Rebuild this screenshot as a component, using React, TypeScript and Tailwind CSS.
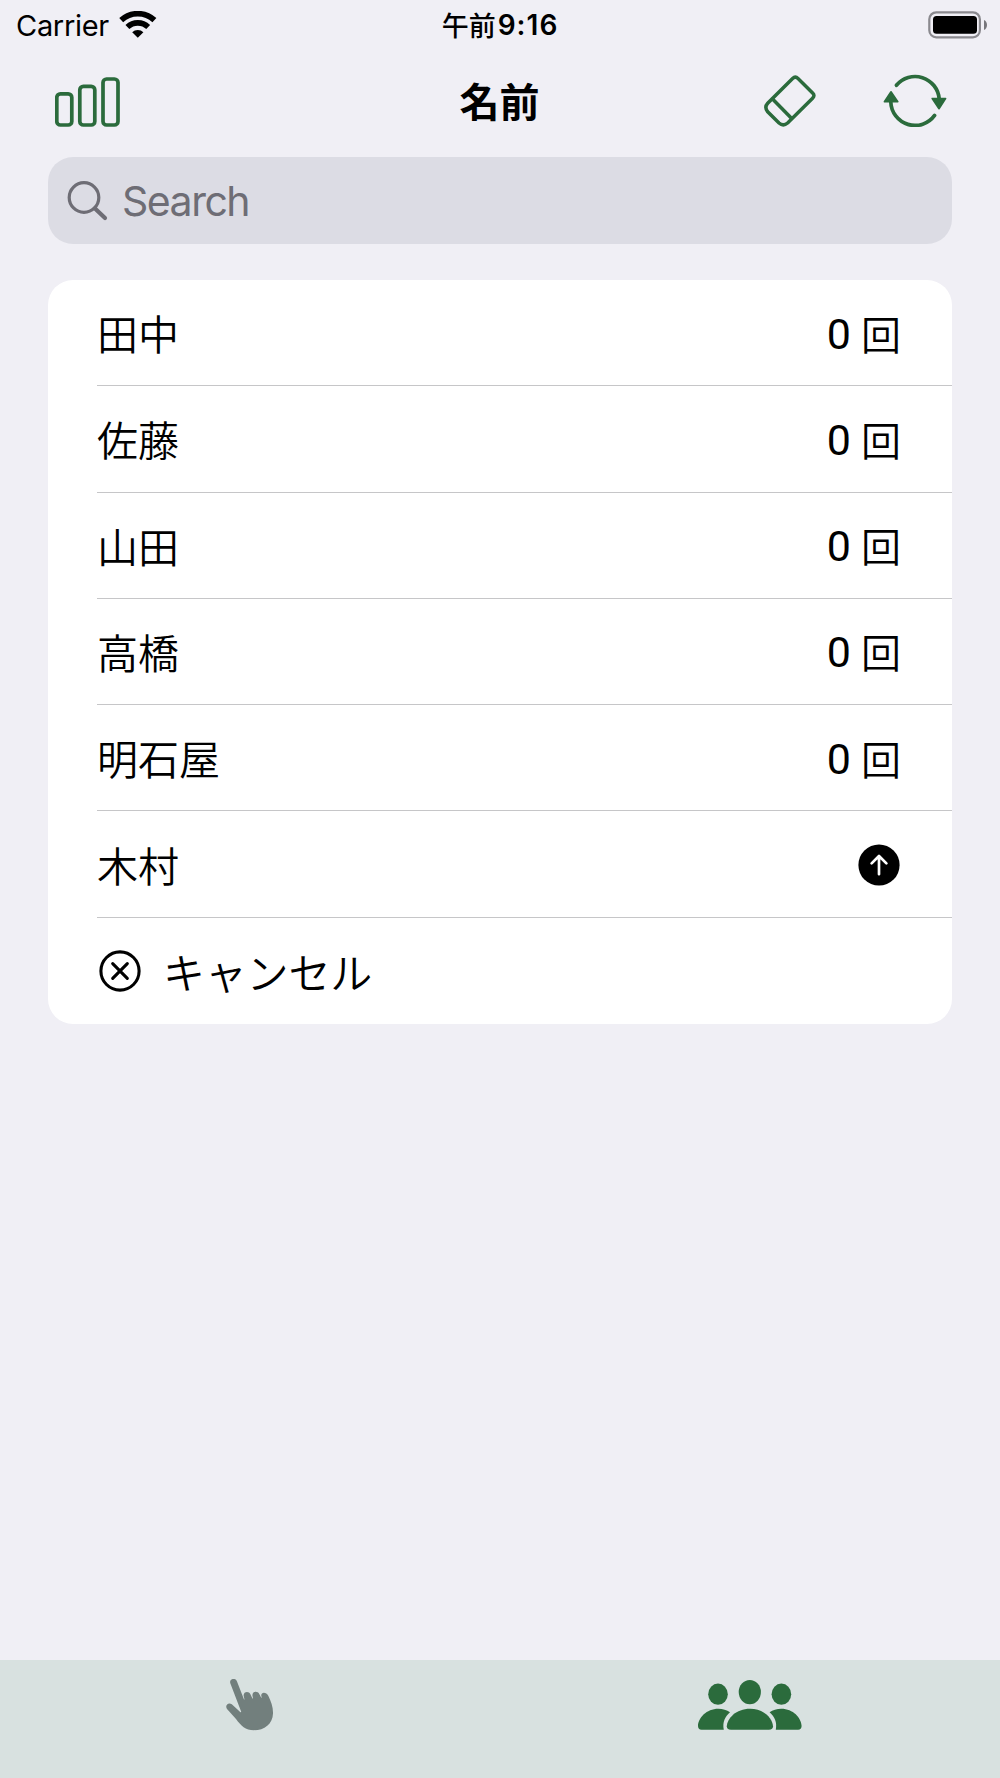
import React from 'react'

const people = [
  { name: '田中', count: 0 },
  { name: '佐藤', count: 0 },
  { name: '山田', count: 0 },
  { name: '高橋', count: 0 },
  { name: '明石屋', count: 0 },
]

function WifiIcon() {
  return (
    <svg width="38" height="28" viewBox="0 0 38 28" className="-ml-px">
      <g fill="none" stroke="#000">
        <path d="M2.2 9.2 A24.5 24.5 0 0 1 35.4 9.2" strokeWidth="5.8" />
        <path d="M8.4 16 A15.2 15.2 0 0 1 29.2 16" strokeWidth="5.6" />
      </g>
      <path d="M18.8 26.8 L13.2 21.2 A8 8 0 0 1 24.4 21.2 Z" />
    </svg>
  )
}

function BatteryIcon() {
  return (
    <svg width="60" height="28" viewBox="0 0 60 28">
      <rect x="1.3" y="1.3" width="50.6" height="25" rx="7" fill="none" stroke="#8a898e" strokeWidth="2.2" />
      <rect x="5" y="5" width="44" height="17.8" rx="3.6" />
      <path d="M56 9 C60 10.5 60 17.5 56 19 Z" fill="#77767b" />
    </svg>
  )
}

function BarsIcon() {
  return (
    <svg width="66" height="50" viewBox="0 0 66 50" fill="none" stroke="#2b6b3c" strokeWidth="3.7">
      <rect x="1.8" y="16.8" width="15" height="31.2" rx="3.6" />
      <rect x="24.8" y="9.3" width="15" height="38.7" rx="3.6" />
      <rect x="48" y="2" width="15" height="46" rx="3.6" />
    </svg>
  )
}

function EraserIcon() {
  return (
    <svg width="52" height="52" viewBox="0 0 52 52" fill="none" stroke="#2b6b3c" strokeWidth="3.5">
      <path d="M28.6 3.4 Q31.3 0.8 34 3.4 L48.6 18 Q51.3 20.6 48.6 23.2 L23.6 48 Q19.2 51.7 15 48 L3.7 36.8 Q0 32.2 3.7 28.2 Z" />
      <path d="M8.3 23.8 L27.2 43" />
    </svg>
  )
}

function RefreshIcon() {
  return (
    <svg width="64" height="54" viewBox="0 0 64 54" className="-mt-[2px]">
      <g fill="none" stroke="#2b6b3c" strokeWidth="3.7" strokeLinecap="round">
        <path d="M13.4 12.3 A24.2 24.2 0 0 1 56.2 26" />
        <path d="M7.8 29 A24.2 24.2 0 0 0 51.6 42.4" />
      </g>
      <g fill="#2b6b3c" stroke="#2b6b3c" strokeWidth="1.6" strokeLinejoin="round">
        <path d="M49.2 25.5 H62.6 L56 35.7 Z" />
        <path d="M1.4 28.8 H14.8 L8 18.8 Z" />
      </g>
    </svg>
  )
}

function SearchIcon() {
  return (
    <svg width="42" height="42" viewBox="0 0 42 42" fill="none" stroke="#6e6d75" strokeLinecap="round" className="shrink-0">
      <circle cx="17" cy="17.5" r="14.8" strokeWidth="3.2" />
      <path d="M28 28.5 L38 38" strokeWidth="4.2" />
    </svg>
  )
}

function SubmitIcon() {
  return (
    <svg width="42" height="42" viewBox="0 0 42 42" className="mt-px">
      <circle cx="21" cy="21" r="20.6" />
      <path d="M21 30.2 V12.4 M13.6 19.4 L21 12 L28.4 19.4" fill="none" stroke="#fff" strokeWidth="2.7" strokeLinecap="round" strokeLinejoin="round" />
    </svg>
  )
}

function CancelIcon() {
  return (
    <svg width="42" height="42" viewBox="0 0 42 42" fill="none" stroke="#000" strokeWidth="3.1" strokeLinecap="round">
      <circle cx="21" cy="21" r="19.1" />
      <path d="M13.7 13.7 L28.3 28.3 M28.3 13.7 L13.7 28.3" />
    </svg>
  )
}

function HandIcon() {
  return (
    <svg width="48" height="52" viewBox="0 0 48 52" fill="#727f7d">
      <path d="M4.3 4.3 C2.9 -0.2 9.2 -2 11 2.4 L18 20.6 L18.5 20.6 L17.6 16.6 C17.4 12.3 23 11.8 24.4 15.2 L26.4 19.6 L27 19.5 L26.4 16.2 C26.4 12 31.8 11.8 33.4 15.2 L35.2 18.8 L35.7 18.6 L35.2 16.4 C35.4 12.6 40.6 13.2 42.4 17 C45 22.4 47.2 28 47 34.4 C46.7 44.8 38.4 51.2 28 51.2 C19.4 51.2 15 46.5 10 39.9 L1 30 C-1.4 26.3 2.2 22.9 5.8 25.2 L14.2 33 C15 33.6 15.4 33 15 32.2 Z" />
    </svg>
  )
}

function PeopleIcon() {
  return (
    <svg width="104" height="50" viewBox="0 0 104 50" fill="#2b6b3c">
      <ellipse cx="20" cy="14.2" rx="9.8" ry="10.6" />
      <ellipse cx="51.8" cy="12.1" rx="11.1" ry="12.1" />
      <ellipse cx="83.4" cy="14.2" rx="9.8" ry="10.6" />
      <path d="M32 32.2 C27 36.5 24.3 42 25.8 49.7 H3.5 C1.3 49.7 0 48.2 0 46 C0.2 38 8.5 28.8 20.3 28.8 C24.8 28.8 28.8 30 32 32.2 Z" />
      <path d="M71.6 32.2 C76.6 36.5 79.3 42 77.8 49.7 H100.1 C102.3 49.7 103.6 48.2 103.6 46 C103.4 38 95.1 28.8 83.3 28.8 C78.8 28.8 74.8 30 71.6 32.2 Z" />
      <path d="M33 49.7 C30 49.7 28.8 48.3 28.8 46.2 C29.3 38.5 38 28.8 52 28.8 C66 28.8 74.5 38.5 75 46.2 C75 48.3 73.8 49.7 70.8 49.7 Z" />
    </svg>
  )
}

function Row({ children }: { children: React.ReactNode }) {
  return (
    <li className="flex-1 pl-[49px] [&:not(:last-child)>div]:border-b">
      <div className="flex h-full items-center justify-between border-[#c6c6c8] pr-[52px]">{children}</div>
    </li>
  )
}

export default function App() {
  return (
    <div className="flex h-[1778px] w-[1000px] flex-col overflow-hidden bg-[#f0eff5] font-['Inter','Noto_Sans_CJK_JP',sans-serif] text-black">
      <div className="grid h-[50px] shrink-0 grid-cols-3 items-center pl-4 pr-[12px]">
        <div className="flex items-center gap-[11px]">
          <span className="pt-px text-[29px] leading-none tracking-[-0.3px]">Carrier</span>
          <WifiIcon />
        </div>
        <div className="-ml-1 flex items-center justify-center gap-[2px] text-[28px] font-semibold leading-none">
          <span className="-mt-px font-['Noto_Sans_CJK_JP',sans-serif] text-[27px] font-medium">午前</span>
          <span className="tracking-[1px]">9:16</span>
        </div>
        <div className="flex justify-end">
          <BatteryIcon />
        </div>
      </div>

      <header className="grid h-[107px] shrink-0 grid-cols-3 items-start pl-[55px] pr-[53px] pt-[25px]">
        <div className="pt-[2px]">
          <BarsIcon />
        </div>
        <h1 className="-ml-[3px] pt-[2px] text-center text-[40px] font-bold leading-[52px]">名前</h1>
        <div className="flex justify-end gap-[67px]">
          <EraserIcon />
          <RefreshIcon />
        </div>
      </header>

      <label className="mx-12 flex h-[87px] shrink-0 items-center gap-[13px] rounded-[25px] bg-[#dcdce4] pl-[19px]">
        <SearchIcon />
        <input
          placeholder="Search"
          className="w-full bg-transparent pt-[2px] text-[41px] tracking-[-1.5px] outline-none placeholder:text-[#6e6d75] placeholder:opacity-100"
        />
      </label>

      <ul className="mx-12 mt-9 flex h-[744px] shrink-0 flex-col overflow-hidden rounded-[25px] bg-white font-['Noto_Sans_CJK_JP',sans-serif] text-[41px] font-[350] leading-none">
        {people.map((person) => (
          <Row key={person.name}>
            <span>{person.name}</span>
            <span className="flex items-center gap-[10px]">
              <span className="pt-[3px] font-['Roboto',sans-serif] text-[43px] font-normal">{person.count}</span>
              <span className="-mr-px text-[40px]">回</span>
            </span>
          </Row>
        ))}
        <Row>
          <span>木村</span>
          <SubmitIcon />
        </Row>
        <Row>
          <div className="flex items-center gap-[22px] pl-[2px]">
            <CancelIcon />
            <span className="text-[42px] tracking-[-0.2px]">キャンセル</span>
          </div>
        </Row>
      </ul>

      <nav className="mt-auto grid h-[118px] shrink-0 grid-cols-2 items-start justify-items-center bg-[#d8e1e0] pt-5">
        <button className="-mt-px">
          <HandIcon />
        </button>
        <button>
          <PeopleIcon />
        </button>
      </nav>
    </div>
  )
}
